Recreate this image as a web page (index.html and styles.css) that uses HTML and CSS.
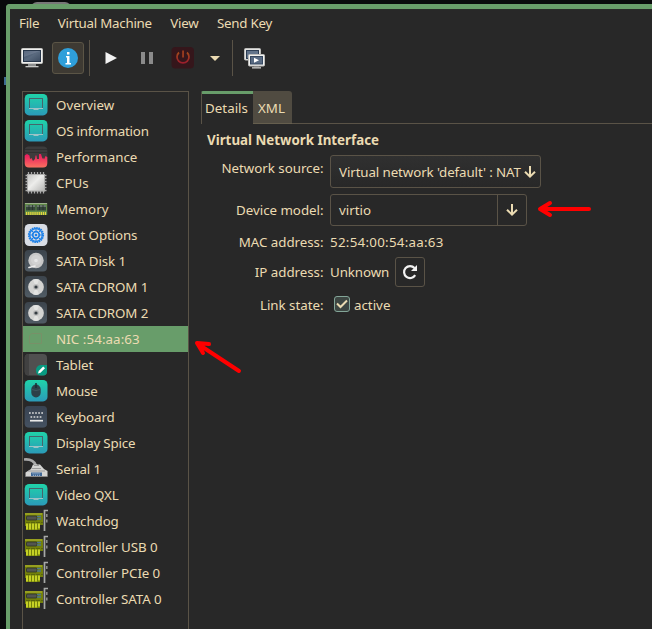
FILE: index.html
```
<!DOCTYPE html>
<html lang="en">
<head>
<meta charset="utf-8">
<title>Virtual Machine</title>
<link rel="stylesheet" href="styles.css">
</head>
<body>
<svg class="defs" width="0" height="0" aria-hidden="true">
  <defs>
    <linearGradient id="teal" x1="0" y1="0" x2="0" y2="1"><stop offset="0" stop-color="#1fd3a9"/><stop offset="1" stop-color="#2b9ab8"/></linearGradient>
    <linearGradient id="slate" x1="0" y1="0" x2="0" y2="1"><stop offset="0" stop-color="#3c444c"/><stop offset="1" stop-color="#505b64"/></linearGradient>
    <linearGradient id="silver" x1="0" y1="0" x2="1" y2="1"><stop offset="0" stop-color="#c4c4c2"/><stop offset=".45" stop-color="#ededeb"/><stop offset="1" stop-color="#b4b4b2"/></linearGradient>
    <linearGradient id="fire" x1="0" y1="0" x2="0" y2="1"><stop offset="0" stop-color="#e8175d"/><stop offset="1" stop-color="#fa7060"/></linearGradient>
    <linearGradient id="screen" x1="0" y1="0" x2="1" y2="1"><stop offset="0" stop-color="#34465e"/><stop offset=".5" stop-color="#5a6a7f"/><stop offset="1" stop-color="#3c4b60"/></linearGradient>
    <symbol id="display" viewBox="0 0 24 24">
      <rect x=".7" y="1" width="22.8" height="21.4" rx="4.5" fill="url(#teal)"/>
      <rect x="5.500" y="5.500" width="13" height="10" fill="none" stroke="#45666b" stroke-width="1"/>
      <path d="M5 15.500h14M9.500 16.500h5" stroke="#9cc3c6" stroke-width="1"/>
    </symbol>
    <symbol id="perf" viewBox="0 0 24 24">
      <rect x=".7" y="1.500" width="22.600" height="21" rx="4" fill="#3c3c3c"/>
      <path d="M1 4.500h22M1 7.500h22" stroke="#303030"/>
      <path d="M.7 10.500 3 9l2.500 1.500L6 14l1.500-1L9 16l2-2 .5-3.500h1l.5 3.500h2V9h2l1.500 5L19 12.500l1 2 1.500-3.500 1.800 1V18q0 4.500-4.300 4.500H5Q.7 22.500.7 18z" fill="url(#fire)"/>
    </symbol>
    <symbol id="cpu" viewBox="0 0 24 24">
      <path d="M4.500 1v21.500M7.500 1v21.500M10.500 1v21.500M13.500 1v21.500M16.500 1v21.500M19.500 1v21.500M1.500 4.500h21M1.500 7.500h21M1.500 10.500h21M1.500 13.500h21M1.500 16.500h21M1.500 19.500h21" stroke="#a8a8a8" stroke-width="1.300"/>
      <rect x="3.500" y="3.500" width="17" height="16.500" fill="url(#silver)" stroke="#b0b0ae"/>
    </symbol>
    <symbol id="memory" viewBox="0 0 24 24">
      <rect x=".8" y="6" width="22.400" height="12" fill="#5f8a47"/>
      <path d="M1 6.500h22" stroke="#9fb28d"/>
      <path d="M2 8h9.500v5.500H2zM12.500 8H22v5.500h-9.500z" fill="#35463b"/>
      <path d="M2 9h9M13 9h9" stroke="#9aa79d"/>
      <path d="M5 8v5M8.500 8v5M15.500 8v5M19 8v5" stroke="#1f2b24" stroke-width=".7"/>
      <path d="M2 16.500h20" stroke="#e4d33e" stroke-width="3" stroke-dasharray="1.300 .8"/>
    </symbol>
    <symbol id="boot" viewBox="0 0 24 24">
      <rect x=".7" y="1" width="22.800" height="22" rx="4.500" fill="#d9dde5"/>
      <circle cx="12" cy="12" r="7.200" fill="none" stroke="#1d80e8" stroke-width="1.800" stroke-dasharray="1.600 .66"/>
      <circle cx="12" cy="12" r="6.300" fill="none" stroke="#1d80e8" stroke-width="1.300"/>
      <circle cx="12" cy="12" r="3.300" fill="none" stroke="#1d80e8" stroke-width="1.700"/>
      <path d="M12 5v3M12 16v3M5 12h3M16 12h3M7 7l2.300 2.300M14.700 14.700 17 17M17 7l-2.300 2.300M9.300 14.700 7 17" stroke="#1d80e8"/>
      <circle cx="12" cy="12" r="1.300" fill="#1d80e8"/>
    </symbol>
    <symbol id="disk" viewBox="0 0 24 24">
      <rect x=".7" y="1" width="22.300" height="21.500" rx="4" fill="url(#slate)"/>
      <circle cx="12" cy="11.500" r="7.700" fill="#c8c8c8"/>
      <circle cx="12" cy="11" r="5" fill="#d2d2d2"/>
      <circle cx="12" cy="11.500" r="1.800" fill="#e6e6e6"/>
      <path d="M5 18.500 11 17" stroke="#eee" stroke-width="1.700" stroke-linecap="round"/>
    </symbol>
    <symbol id="cdrom" viewBox="0 0 24 24">
      <rect x=".7" y="1" width="22.300" height="21.500" rx="4" fill="url(#slate)"/>
      <circle cx="12" cy="12" r="7.900" fill="#d3d3d1"/>
      <path d="M12 12 9 4.700a8 8 0 0 1 6 0zM12 12l3 7.300a8 8 0 0 1-6 0z" fill="#e3e3e1"/>
      <circle cx="12" cy="12" r="2.800" fill="#b5b5b5"/>
      <circle cx="12" cy="12" r="1.600" fill="#363d42"/>
    </symbol>
    <symbol id="nic" viewBox="0 0 24 24">
      <path d="M7.500 6.500h10v10h-12v-8z" fill="none" stroke="#789068"/>
    </symbol>
    <symbol id="tablet" viewBox="0 0 24 24">
      <rect x=".7" y="1" width="22.300" height="21.500" rx="4" fill="#505050"/>
      <path d="M5 1h-.3Q.7 1 .7 5v13.500q0 4 4 4H5z" fill="#414141"/>
      <path d="M12 17.500q0-5.500 5.500-5.500H23v6.500q0 4-4 4h-2q-5 0-5-5z" fill="#079a81"/>
      <path d="m14 20.500.7-2.500 4.500-4.500 1.800 1.800-4.500 4.500z" fill="#fff"/>
    </symbol>
    <symbol id="mouse" viewBox="0 0 24 24">
      <rect x=".7" y="1" width="22.800" height="21.400" rx="4.500" fill="url(#teal)"/>
      <rect x="7.300" y="5.500" width="9.400" height="13" rx="4.700" fill="#2c4048"/>
      <path d="M12 4v5" stroke="#182a30" stroke-width="1.500"/>
      <path d="M7.500 10.500q4.500 2 9 0" fill="none" stroke="#486168" stroke-width=".7"/>
    </symbol>
    <symbol id="keyboard" viewBox="0 0 24 24">
      <rect x=".7" y="1" width="22.300" height="21.500" rx="4" fill="url(#slate)"/>
      <rect x=".7" y="1" width="22.300" height="21.500" rx="4" fill="#34435c" opacity=".4"/>
      <path d="M5 8h14" stroke="#dedede" stroke-width="1.700" stroke-dasharray="1.700 1.370"/>
      <path d="M6.500 12h11" stroke="#dedede" stroke-width="1.700" stroke-dasharray="1.700 1.370"/>
      <path d="M6 15.700h13" stroke="#e8e8e8" stroke-width="1.700"/>
    </symbol>
    <symbol id="serial" viewBox="0 0 24 24">
      <path d="M0 2.500q9-1 12 6" fill="none" stroke="#a8a8a8" stroke-width="2.600"/>
      <path d="M9 7.500h7l4 4.500 3.500 2v5.500H1.500v-4L7 12z" fill="#d4d4d2"/>
      <path d="M10 8.500h5M8 11.500h9M4 14h17" stroke="#8e8e8e" stroke-width=".8"/>
      <rect x="7" y="15.500" width="11" height="4" fill="#416896"/>
      <path d="M8.500 16.700h8M9 18.300h7" stroke="#a4bcd8" stroke-dasharray="1 1"/>
      <path d="M1.500 19.500h22" stroke="#8b8b8b"/>
    </symbol>
    <symbol id="card" viewBox="0 0 24 24">
      <path d="M1 4h18v12h-3v5H2v-4H1z" fill="#73800b"/>
      <path d="M1 5h17" stroke="#a3aa27" stroke-width="1.500"/>
      <rect x="2.500" y="7" width="10.500" height="4" rx="1" fill="#52554f" stroke="#2c3026" stroke-width=".8"/>
      <path d="M13 7.500h4M13 10h4" stroke="#4c7590" stroke-width="1.500"/>
      <path d="M2 13.500h17" stroke="#59650c" stroke-width="1" stroke-dasharray="4 1"/>
      <path d="M3 14.500v6M6 14.500v6M9 14.500v6M12 14.500v6M15 14.500v5" stroke="#dbe52d" stroke-width="1.600"/>
      <path d="M24 1.500h-3.500v20.500" fill="none" stroke="#a6a8a6" stroke-width="1.700"/>
      <path d="M22.800 5v3M22.800 10.500v3" stroke="#91938f" stroke-width="1.500"/>
    </symbol>
    <symbol id="down" viewBox="0 0 12 12"><path d="M6 0v10.200M1 5.700l5 4.900 5-4.900" fill="none" stroke="#ebdbb2" stroke-width="2"/></symbol>
  </defs>
</svg>
<div class="desk-shape"></div>
<div class="desk-text"></div>
<div class="window">
  <nav class="menu"><span>File</span><span>Virtual Machine</span><span>View</span><span>Send Key</span></nav>
  <div class="toolbar">
    <svg class="t-monitor" width="22" height="20" viewBox="0 0 22 20">
      <rect x=".5" y=".5" width="21" height="15" rx="1" fill="#efefed" stroke="#c6c6c4"/>
      <rect x="2.500" y="2.500" width="17" height="11" fill="url(#screen)" stroke="#27364a"/>
      <path d="M3 3h16L3 9z" fill="#8491a3" opacity=".45"/>
      <path d="M7 16h8v2H7z" fill="#8d8f8f"/><path d="M4.500 18h13v1.300h-13z" fill="#c9cac8"/>
    </svg>
    <div class="info"><svg width="20" height="20" viewBox="0 0 20 20"><circle cx="10" cy="10" r="10" fill="#2f9fda"/><path d="M9 4h2.500v2.500H9zM8 8h3.500v7H13v1.500H7.500V15H9V9.500H8z" fill="#fff"/></svg></div>
    <i class="sep s1"></i>
    <svg class="t-play" width="12" height="12" viewBox="0 0 12 12"><path d="M.5 0 12 6 .5 12z" fill="#f2f2f2"/></svg>
    <svg class="t-pause" width="12" height="12" viewBox="0 0 12 12"><path d="M0 0h4v12H0zM8 0h4v12H8z" fill="#8b8b8b"/></svg>
    <svg class="t-power" width="24" height="22" viewBox="0 0 24 22"><defs><linearGradient id="pw" x1="0" y1="0" x2="0" y2="1"><stop offset="0" stop-color="#a34b1b"/><stop offset="1" stop-color="#9c1d2c"/></linearGradient></defs><rect x=".5" width="22.500" height="21.500" rx="4" fill="#35161b"/><path d="M8 5.500a6 6 0 1 0 8 0" fill="none" stroke="url(#pw)" stroke-width="1.700"/><path d="M11.200 3.500h1.700v7h-1.700z" fill="#a33f20"/></svg>
    <svg class="t-caret" width="10" height="5" viewBox="0 0 10 5"><path d="M0 0h10L5 5z" fill="#ebdbb2"/></svg>
    <i class="sep s2"></i>
    <svg class="t-screens" width="21" height="21" viewBox="0 0 21 21">
      <rect x=".5" y=".5" width="16" height="11.500" rx="1" fill="#e4e4e2" stroke="#bdbdbb"/><rect x="2.500" y="2.500" width="12" height="8" fill="#62748b" stroke="#2d3e54"/>
      <rect x="4.500" y="6.500" width="16" height="11.500" rx="1" fill="#f2f2f0" stroke="#bdbdbb"/><rect x="6.500" y="8.500" width="12" height="7.500" fill="#596b83" stroke="#35475f"/>
      <path d="m10 9.700 5 2.500-5 2.500z" fill="#fff"/><path d="M10 18.200h5v1h-5z" fill="#8e8e8e"/><path d="M8 19.200h9v1.300H8z" fill="#cfcfcd"/>
    </svg>
  </div>
  <div class="content">
    <ul class="hardware">
      <li><svg><use href="#display"/></svg>Overview</li>
      <li class="tight"><svg><use href="#display"/></svg>OS information</li>
      <li><svg><use href="#perf"/></svg>Performance</li>
      <li><svg><use href="#cpu"/></svg>CPUs</li>
      <li><svg><use href="#memory"/></svg>Memory</li>
      <li class="snug"><svg><use href="#boot"/></svg>Boot Options</li>
      <li class="snug"><svg><use href="#disk"/></svg>SATA Disk 1</li>
      <li class="snug"><svg><use href="#cdrom"/></svg>SATA CDROM 1</li>
      <li class="snug"><svg><use href="#cdrom"/></svg>SATA CDROM 2</li>
      <li class="selected"><svg><use href="#nic"/></svg>NIC :54:aa:63</li>
      <li class="snug"><svg><use href="#tablet"/></svg>Tablet</li>
      <li class="snug"><svg><use href="#mouse"/></svg>Mouse</li>
      <li class="snug"><svg><use href="#keyboard"/></svg>Keyboard</li>
      <li class="tight"><svg><use href="#display"/></svg>Display Spice</li>
      <li class="snug"><svg><use href="#serial"/></svg>Serial 1</li>
      <li class="snug"><svg><use href="#display"/></svg>Video QXL</li>
      <li class="snug"><svg><use href="#card"/></svg>Watchdog</li>
      <li class="snug"><svg><use href="#card"/></svg>Controller USB 0</li>
      <li class="snug"><svg><use href="#card"/></svg>Controller PCIe 0</li>
      <li class="snug"><svg><use href="#card"/></svg>Controller SATA 0</li>
    </ul>
    <main class="panel">
      <div class="tabs"><div class="tab active">Details</div><div class="tab other">XML</div><div class="rule"></div></div>
      <h1>Virtual Network Interface</h1>
      <div class="row source"><label>Network source:</label><div class="select"><span>Virtual network 'default' : NAT</span><svg width="12" height="12"><use href="#down"/></svg></div></div>
      <div class="row model"><label>Device model:</label><div class="combo"><span>virtio</span><b><svg width="12" height="12"><use href="#down"/></svg></b></div></div>
      <div class="row mac"><label>MAC address:</label><span>52:54:00:54:aa:63</span></div>
      <div class="row ip"><label>IP address:</label><span>Unknown</span><div class="refresh"><svg width="16" height="16" viewBox="0 0 16 16"><path d="M13.200 11.200A6 6 0 1 1 12.500 4" fill="none" stroke="#f2f2f2" stroke-width="2.200"/><path d="M15 1v6H9z" fill="#f2f2f2"/></svg></div></div>
      <div class="row link"><label>Link state:</label><div class="check"><svg width="12" height="10" viewBox="0 0 12 10"><path d="m1 4.500 3.500 3.500L11 1.500" fill="none" stroke="#ebdbb2" stroke-width="2"/></svg></div><span>active</span></div>
    </main>
  </div>
</div>
<svg class="marks" width="652" height="629" viewBox="0 0 652 629">
  <g fill="none" stroke="#f00" stroke-width="4" stroke-linecap="round" stroke-linejoin="round">
    <path d="M589 209h-48M550 203l-10 6 10 6"/>
    <path d="m239 371-41-27M209 344l-12-1 6 10"/>
  </g>
</svg>
</body>
</html>
```
FILE: styles.css
```
* { box-sizing: border-box; }
body {
  margin: 0;
  width: 652px;
  height: 629px;
  padding: 4px 0 0 6px;
  overflow: hidden;
  position: relative;
  background: #090a0c;
  color: #ebdbb2;
  font: 13.333px/18px "Noto Sans", sans-serif;
}
svg { display: block; flex: none; }
.defs { position: absolute; }
.desk-shape { position: absolute; left: 31px; top: 2px; width: 40px; height: 8px; border-radius: 6px 6px 0 0; background: #777; }
.desk-text { position: absolute; left: 4px; top: 77px; width: 2px; height: 8px; background: #3d6b91; }
.window {
  position: relative;
  height: 625px;
  border-left: 4px solid #689d6a;
  border-top: 5px solid #689d6a;
  border-top-left-radius: 4px;
  background: #282828;
}
.menu { display: flex; gap: 18.500px; height: 31px; padding: 5px 0 0 9px; white-space: nowrap; letter-spacing: -.25px; }
.toolbar { display: flex; align-items: center; height: 36px; padding-left: 11px; }
.info { display: flex; align-items: center; justify-content: center; width: 32px; height: 32px; margin-left: 9px; border: 1px solid #5b5546; border-radius: 3px; background: #3e3a33; }
.sep { width: 1px; height: 36px; background: #5a5347; }
.s1 { margin-left: 5px; }
.t-play { margin-left: 15px; }
.t-pause { margin-left: 24px; }
.t-power { margin-left: 18px; }
.t-caret { margin-left: 15px; }
.s2 { margin-left: 12px; }
.t-screens { margin-left: 11px; }
.content { display: flex; height: 553px; padding: 15px 0 0 12px; }
.hardware { width: 167px; flex: none; margin: 0; padding: 0; list-style: none; border: 1px solid #5a5347; border-bottom: 0; }
.hardware li { display: flex; align-items: center; height: 26px; padding-left: 1px; gap: 8px; white-space: nowrap; }
.hardware svg { width: 24px; height: 24px; }
.hardware .snug { letter-spacing: -.1px; }
.hardware .tight { letter-spacing: -.2px; }
.selected { background: #689d6a; letter-spacing: .08px; }
.panel { flex: 1; margin-left: 12px; }
.tabs { display: flex; height: 33px; }
.tab { display: flex; align-items: center; justify-content: center; padding-top: 2px; }
.active { width: 52px; border-left: 1px solid #5a5347; border-top: 3px solid #689d6a; border-radius: 2px 0 0 0; padding: 0 2px 2px 0; }
.other { width: 39px; background: #504b41; border-bottom: 1px solid #665f4e; border-radius: 0 3px 0 0; padding-right: 2px; }
.rule { flex: 1; border-bottom: 1px solid #5a5347; }
h1 { margin: 7px 0 6px 6px; font-size: 13.333px; line-height: 18px; font-weight: 700; }
.row { display: flex; align-items: center; padding-left: 6px; white-space: nowrap; }
label { width: 117px; margin-right: 6px; padding-right: .5px; text-align: right; letter-spacing: -.03px; }
.source { height: 33px; margin-bottom: 6px; }
.source label { padding-bottom: 7px; }
.select { display: flex; align-items: center; justify-content: space-between; width: 211px; height: 33px; padding: 1px 4px 0 8px; border: 1px solid #5a5347; border-radius: 3px; background: linear-gradient(#303030, #282828); letter-spacing: -.1px; }
.model { height: 32px; }
.combo { display: flex; align-items: center; width: 197px; height: 32px; padding-left: 8px; border: 1px solid #5a5347; border-radius: 3px; }
.combo span { flex: 1; }
.combo b { display: flex; align-items: center; justify-content: center; width: 29px; height: 30px; border-left: 1px solid #5a5347; }
.mac { height: 31px; }
.mac span { letter-spacing: .27px; }
.ip { height: 30px; }
.ip span { width: 59px; letter-spacing: -.1px; }
.refresh { display: flex; align-items: center; justify-content: center; width: 30px; height: 30px; margin-left: 6px; border: 1px solid #5a5347; border-radius: 3px; }
.link { height: 18px; margin-top: 9px; }
.check { display: flex; align-items: center; justify-content: center; width: 16px; height: 16px; margin: -2px 4px 0; border: 1px solid #83a598; border-radius: 3px; background: #3d4642; }
.marks { position: absolute; left: 0; top: 0; pointer-events: none; }
```
